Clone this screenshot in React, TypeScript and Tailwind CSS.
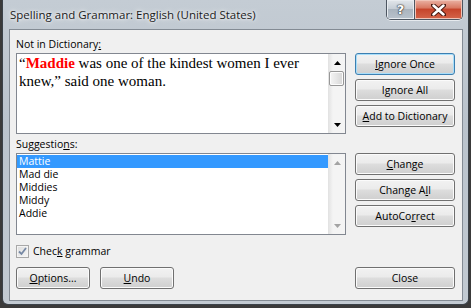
import React from "react";

const UI = "font-['Open_Sans',sans-serif] text-[10.5px] text-black";

function Btn({ children, w = "w-[100px]", def = false }: { children: React.ReactNode; w?: string; def?: boolean }) {
  return (
    <div
      className={`${w} h-[22px] rounded-[3px] border ${
        def
          ? "border-[#3c7fb1] shadow-[inset_0_0_0_1px_#a8defa]"
          : "border-[#707070] shadow-[inset_0_0_0_1px_#fbfbfb]"
      } bg-[linear-gradient(to_bottom,#f2f2f2_0%,#ebebeb_45%,#dddddd_50%,#cfcfcf_100%)] flex items-center justify-center leading-[15px]`}
    >
      <span>{children}</span>
    </div>
  );
}

function Arrow({ up, color }: { up: boolean; color: string }) {
  return (
    <svg width="7" height="4" viewBox="0 0 7 4">
      <path d={up ? "M0 4 L3.5 0 L7 4 Z" : "M0 0 L3.5 4 L7 0 Z"} fill={color} />
    </svg>
  );
}

function ScrollBar({ thumb }: { thumb: boolean }) {
  const c = thumb ? "#000000" : "#a3a3a3";
  return (
    <div className="w-[17px] h-full border-l border-[#e3e3e3] bg-[linear-gradient(to_right,#e5e5e5,#f4f4f4_25%,#f4f4f4)] flex flex-col">
      <div className="h-[17px] flex items-center justify-center">
        <Arrow up color={c} />
      </div>
      {thumb && (
        <div className="w-[15px] h-[15px] rounded-[2px] border border-[#979797] bg-[linear-gradient(to_right,#f5f5f5,#e6e6e6_50%,#d6d6d6)] shadow-[inset_0_0_0_1px_#fcfcfc]" />
      )}
      <div className="flex-1" />
      <div className="h-[17px] flex items-center justify-center">
        <Arrow up={false} color={c} />
      </div>
    </div>
  );
}

export default function App() {
  const items = ["Mattie", "Mad die", "Middies", "Middy", "Addie"];
  return (
    <div className={`w-[471px] h-[308px] bg-[#3a3a3a] overflow-hidden ${UI}`}>
      <div className="ml-[2px] w-[467px] h-[305px] border-x border-b border-[#3b4249] rounded-b-[6px] bg-[linear-gradient(to_bottom,#c4ccd4,#bac3cc_40%,#c2cad2)] flex flex-col">
        {/* Title bar */}
        <div className="h-[29px] flex items-start">
          <div className="pl-[7px] pt-[7px] leading-[15px] text-[11.5px] text-[#1b1b1b] [text-shadow:0_0_6px_#ffffff,0_0_3px_#ffffff]">
            Spelling and Grammar: English (United States)
          </div>
          <div className="ml-auto mr-[5px] flex h-[20px] border border-t-0 border-[#4d5661] rounded-b-[5px] overflow-hidden shadow-[0_1px_0_#e6eaee]">
            <div className="w-[27px] h-full bg-[linear-gradient(to_bottom,#e2e6ea,#c6ced6_45%,#aab4be_50%,#b8c2cc)] shadow-[inset_0_0_0_1px_#e8ecf0] flex items-center justify-center text-white font-['DejaVu_Sans',sans-serif] font-bold text-[13px] leading-none [text-shadow:0_0_1px_#333,0_0_1px_#333,0_0_2px_#333]">
              ?
            </div>
            <div className="w-[1px] h-full bg-[#4d5661]" />
            <div className="w-[47px] h-full bg-[linear-gradient(to_bottom,#eab2a4,#d97a64_40%,#c6452c_50%,#d4654a)] shadow-[inset_0_0_0_1px_#f0c4b8] flex items-center justify-center">
              <svg width="15" height="12" viewBox="0 0 15 12">
                <path d="M2 1 L13 11 M13 1 L2 11" stroke="#4a1a12" strokeWidth="4.5" strokeLinecap="round" />
                <path d="M2.5 1.5 L12.5 10.5 M12.5 1.5 L2.5 10.5" stroke="#ffffff" strokeWidth="2.5" strokeLinecap="round" />
              </svg>
            </div>
          </div>
        </div>

        {/* Client area */}
        <div className="ml-[6px] mr-[5px] h-[272px] border border-[#838b94] bg-[#f0f0f0] pl-[6px] pr-[7px] flex flex-col">
          {/* Not in dictionary row */}
          <div className="flex">
            <div className="w-[330px]">
              <div className="h-[23px] pt-[7px] leading-[15px]">
                Not in Dictionary<span className="underline">:</span>
              </div>
              <div className="h-[81px] border border-[#828790] bg-white flex">
                <div className="flex-1 pl-[2px] font-['Liberation_Serif',serif] text-[15px] leading-[18px] text-black">
                  “<span className="font-bold text-[#ff0000]">Maddie</span> was one of the kindest women I ever
                  <br />
                  knew,” said one woman.
                </div>
                <ScrollBar thumb />
              </div>
            </div>
            <div className="ml-[9px] pt-[23px] flex flex-col gap-[4px]">
              <Btn def>
                <span className="underline">I</span>gnore Once
              </Btn>
              <Btn>
                I<span className="underline">g</span>nore All
              </Btn>
              <Btn>
                <span className="underline">A</span>dd to Dictionary
              </Btn>
            </div>
          </div>

          {/* Suggestions row */}
          <div className="flex">
            <div className="w-[330px]">
              <div className="h-[19px] pt-[3px] leading-[15px]">
                Suggestio<span className="underline">n</span>s:
              </div>
              <div className="h-[82px] border border-[#828790] bg-white flex">
                <div className="flex-1 pt-[1px] flex flex-col">
                  {items.map((it, i) => (
                    <div
                      key={it}
                      className={`h-[13px] leading-[13px] pl-[2px] ${i === 0 ? "bg-[#3399ff] text-white" : "text-black"}`}
                    >
                      {it}
                    </div>
                  ))}
                </div>
                <ScrollBar thumb={false} />
              </div>
            </div>
            <div className="ml-[9px] pt-[19px] flex flex-col gap-[4px]">
              <Btn>
                <span className="underline">C</span>hange
              </Btn>
              <Btn>
                Change A<span className="underline">l</span>l
              </Btn>
              <Btn>
                AutoCo<span className="underline">r</span>rect
              </Btn>
            </div>
          </div>

          {/* Check grammar */}
          <div className="mt-[10px] h-[13px] flex items-center">
            <div className="w-[13px] h-[13px] border border-[#a8a8a8] bg-[linear-gradient(to_bottom_right,#dcdcdc,#f6f6f6)] shadow-[inset_0_0_0_1px_#f4f4f4] flex items-center justify-center">
              <svg width="9" height="9" viewBox="0 0 9 9">
                <path d="M1 4.5 L3.5 7 L8 1" stroke="#7688a4" strokeWidth="1.8" fill="none" />
              </svg>
            </div>
            <div className="ml-[4px] leading-[15px]">
              Chec<span className="underline">k</span> grammar
            </div>
          </div>

          {/* Bottom buttons */}
          <div className="mt-[9px] flex">
            <Btn w="w-[74px]">
              <span className="underline">O</span>ptions...
            </Btn>
            <div className="ml-[10px]">
              <Btn w="w-[74px]">
                <span className="underline">U</span>ndo
              </Btn>
            </div>
            <div className="ml-auto">
              <Btn>Close</Btn>
            </div>
          </div>
        </div>
      </div>
    </div>
  );
}
